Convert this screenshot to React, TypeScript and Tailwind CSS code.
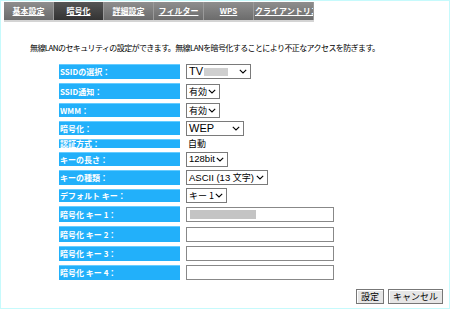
import React from 'react';

const jp = { fontFamily: '"Noto Sans CJK JP", "Noto Sans", sans-serif' };
const ar = { fontFamily: '"Liberation Sans", "Noto Sans CJK JP", sans-serif' };

const tabs = ['基本設定', '暗号化', '詳細設定', 'フィルター', 'WPS', 'クライアントリスト'];

function Chevron() {
  return (
    <svg width="8" height="5" viewBox="0 0 8 5" className="shrink-0">
      <path d="M0.8 0.8l3.2 3.2L7.2 0.8" fill="none" stroke="#000" strokeWidth="1.1" />
    </svg>
  );
}

function Select({ w, children }: { w: string; children: React.ReactNode }) {
  return (
    <div
      className={`${w} h-[15px] shrink-0 border border-[#7a7a7a] bg-white flex items-center justify-between pl-[2px] pr-[3px] text-[11px] leading-none text-black whitespace-nowrap overflow-hidden`}
      style={ar}
    >
      <span className="flex items-center whitespace-nowrap">{children}</span>
      <Chevron />
    </div>
  );
}

function TextBox({ blur }: { blur?: boolean }) {
  return (
    <div className="w-[148px] h-[15px] shrink-0 border border-[#888] bg-white flex items-center pl-[3px]">
      {blur && <div className="w-[66px] h-[9px] bg-[#c4c4c4]" />}
    </div>
  );
}

type Row = { label: string; h: string; value: React.ReactNode };

const rows: Row[] = [
  {
    label: 'SSIDの選択：',
    h: 'h-[15px]',
    value: (
      <Select w="w-[65px]">
        TV<span className="ml-[1px] inline-block w-[24px] h-[8px] bg-[#cfcfcf]" />
      </Select>
    ),
  },
  { label: 'SSID通知：', h: 'h-[16px]', value: <Select w="w-[34px]"><span style={jp} className="text-[9px]">有効</span></Select> },
  { label: 'WMM：', h: 'h-[14px]', value: <Select w="w-[34px]"><span style={jp} className="text-[9px]">有効</span></Select> },
  { label: '暗号化：', h: 'h-[14px]', value: <Select w="w-[58px]">WEP</Select> },
  {
    label: '認証方式：',
    h: 'h-[9px]',
    value: (
      <span className="pl-[2px] text-[9px] leading-none text-black" style={jp}>
        自動
      </span>
    ),
  },
  { label: 'キーの長さ：', h: 'h-[14px]', value: <Select w="w-[42px]"><span className="text-[9.5px]">128bit</span></Select> },
  {
    label: 'キーの種類：',
    h: 'h-[15px]',
    value: (
      <Select w="w-[82px]">
        <span className="text-[9.5px]">ASCII (13&nbsp;</span>
        <span style={jp} className="text-[9px]">文字</span>
        <span className="text-[9.5px]">)</span>
      </Select>
    ),
  },
  { label: 'デフォルト キー：', h: 'h-[13px]', value: <Select w="w-[41px]"><span style={jp} className="text-[9px]">キー 1</span></Select> },
  { label: '暗号化 キー 1：', h: 'h-[16px]', value: <TextBox blur /> },
  { label: '暗号化 キー 2：', h: 'h-[16px]', value: <TextBox /> },
  { label: '暗号化 キー 3：', h: 'h-[15px]', value: <TextBox /> },
  { label: '暗号化 キー 4：', h: 'h-[15px]', value: <TextBox /> },
];

export default function App() {
  return (
    <div className="w-[450px] h-[309px] bg-white border border-[#c6fafc] overflow-hidden flex flex-col" style={jp}>
      {/* tab bar */}
      <div className="ml-[3px] mt-[1px] w-[310px] h-[18px] flex bg-gradient-to-b from-[#8e8e8e] to-[#6c6c6c] border-b-2 border-[#d4d4d4] box-content overflow-hidden">
        {tabs.map((t, i) => (
          <div
            key={t}
            className={`${i === 5 ? 'w-[60px] justify-start pl-[1px]' : 'w-[50px] justify-center'} shrink-0 h-[18px] flex items-center overflow-hidden whitespace-nowrap border-r border-[#9a9a9a] ${
              i === 1 ? 'bg-gradient-to-b from-[#555] to-[#333]' : ''
            }`}
          >
            <span className="text-[8px] font-bold text-white underline leading-none">{t}</span>
          </div>
        ))}
      </div>

      <p className="mt-[22px] ml-[29px] text-[8px] tracking-[-0.6px] leading-none text-black whitespace-nowrap">
        無線LANのセキュリティの設定ができます。無線LANを暗号化することにより不正なアクセスを防ぎます。
      </p>

      <div className="mt-[12px] ml-[58px] flex flex-col gap-[4px]">
        {rows.map((r) => (
          <div key={r.label} className={`${r.h} flex items-center gap-[6px]`}>
            <div className="w-[121px] shrink-0 h-full bg-[#22b0fa] border-t border-[#66ccff] flex items-center pl-[1px] text-[8px] font-bold text-white leading-none whitespace-nowrap">
              {r.label}
            </div>
            {r.value}
          </div>
        ))}
      </div>

      <div className="mt-auto mb-[4px] mr-[6px] flex justify-end gap-[4px]">
        <button className="h-[15px] px-[4px] bg-[#e6e6e6] border border-[#777] shadow-[inset_1px_1px_0_#fff] text-[9px] leading-none text-black">
          設定
        </button>
        <button className="h-[15px] px-[4px] bg-[#e6e6e6] border border-[#777] shadow-[inset_1px_1px_0_#fff] text-[9px] leading-none text-black">
          キャンセル
        </button>
      </div>
    </div>
  );
}
